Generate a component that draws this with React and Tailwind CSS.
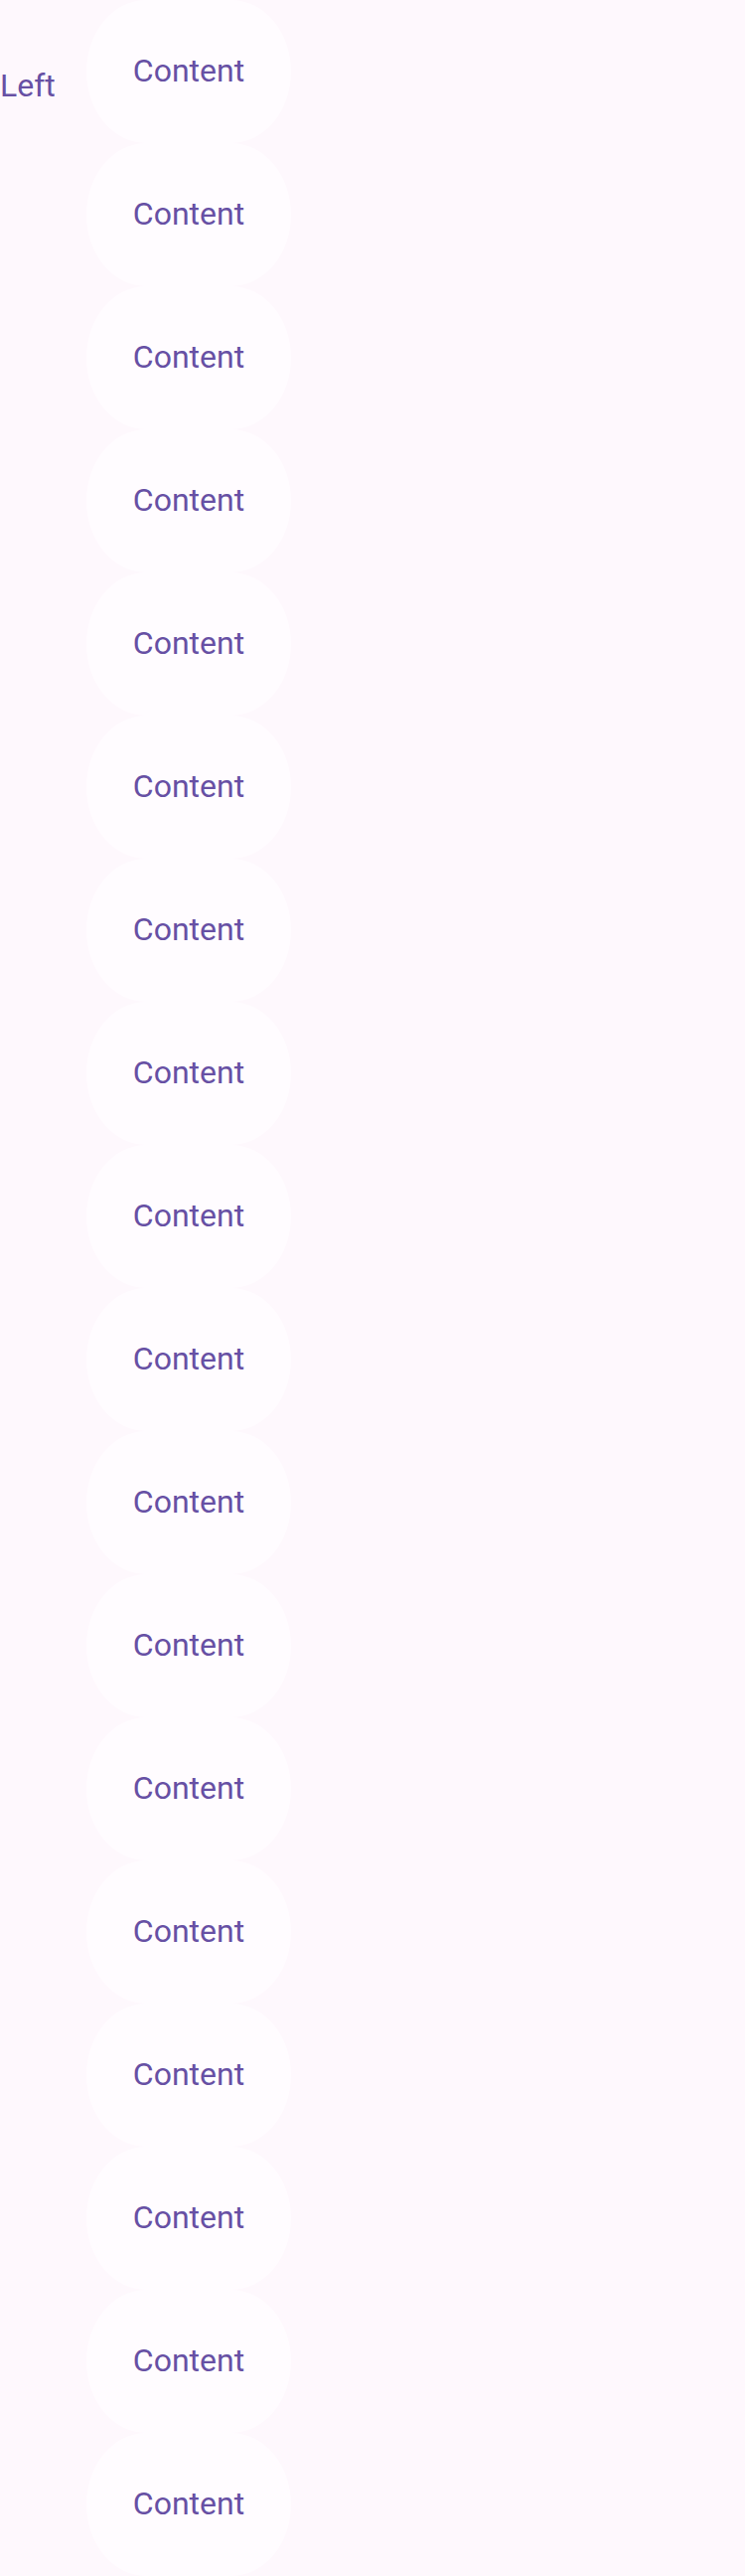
export default function App() {
  const rows = Array.from({ length: 18 });
  return (
    <div className="w-[750px] h-[2592px] bg-[#fef8fd] flex items-start overflow-hidden" style={{ fontFamily: "Roboto, 'Noto Sans', sans-serif" }}>
      <div className="w-[87px] pt-[68px] text-[32px] leading-[1.172] text-[#6750a4]">Left</div>
      <div className="flex flex-col">
        {rows.map((_, i) => (
          <div key={i} className="h-[144px] w-[206px] rounded-[60px/72px] bg-[#fffcff] flex items-center justify-center text-[32px] leading-[1.172] text-[#6750a4]">
            Content
          </div>
        ))}
      </div>
    </div>
  );
}
